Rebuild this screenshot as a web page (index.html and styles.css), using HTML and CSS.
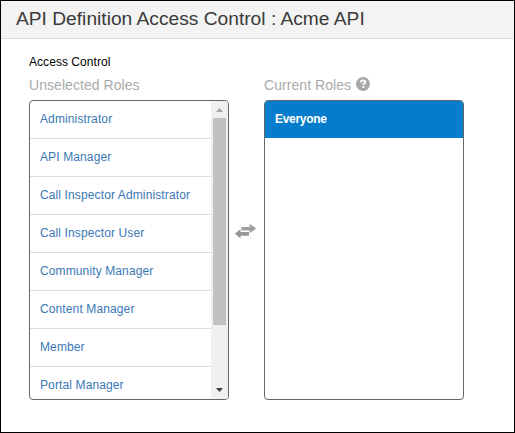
FILE: index.html
```html
<!DOCTYPE html>
<html lang="en">
<head>
<meta charset="utf-8">
<title>API Definition Access Control</title>
<link rel="stylesheet" href="styles.css">
</head>
<body>
<div class="window">
  <header class="header"><h1>API Definition Access Control : Acme API</h1></header>
  <main class="content">
    <div class="section-title">Access Control</div>
    <div class="picker">
      <section class="column">
        <h2>Unselected Roles</h2>
        <div class="box">
          <ul class="roles">
            <li>Administrator</li>
            <li>API Manager</li>
            <li>Call Inspector Administrator</li>
            <li>Call Inspector User</li>
            <li>Community Manager</li>
            <li>Content Manager</li>
            <li>Member</li>
            <li>Portal Manager</li>
          </ul>
          <div class="scrollbar">
            <svg class="arrow" width="17" height="17" viewBox="0 0 17 17"><path d="M5 11h7L8.500 7z" fill="#a3a3a3"/></svg>
            <div class="thumb"></div>
            <svg class="arrow" width="17" height="17" viewBox="0 0 17 17"><path d="M5 6h7L8.500 10z" fill="#404040"/></svg>
          </div>
        </div>
      </section>
      <div class="swap">
        <svg width="23" height="16" viewBox="0 0 23 16"><path d="M7.500 4h8.200V.8L22.200 5.500l-6.500 4.700V7.400H7.500z" fill="#a0a0a0"/><path d="M15 9H6.500V6L.8 10.700l5.700 4.700v-2.600H15z" fill="#989898"/></svg>
      </div>
      <section class="column">
        <h2>Current Roles <svg class="help" width="14" height="14" viewBox="0 0 14 14"><circle cx="7" cy="7" r="7" fill="#a8a8a8"/><path d="M4.700 5.300C4.900 3.900 5.800 3.400 7 3.400c1.300 0 2.200.7 2.200 1.800 0 1.300-1.900 1.400-1.900 2.900" fill="none" stroke="#fff" stroke-width="1.900"/><path d="M6.300 9.200h2V11h-2z" fill="#fff"/></svg></h2>
        <div class="box">
          <ul class="roles">
            <li class="selected">Everyone</li>
          </ul>
        </div>
      </section>
    </div>
  </main>
</div>
</body>
</html>
```
FILE: styles.css
```css
* { box-sizing: border-box; }
body {
  margin: 0;
  font-family: "Liberation Sans", Arial, sans-serif;
  font-size: 12px;
  color: #000;
  background: #fff;
}
.window {
  width: 515px;
  height: 433px;
  border: 1px solid #000;
  overflow: hidden;
}
.header {
  height: 38px;
  padding-left: 15px;
  background: #f3f3f3;
  border-bottom: 1px solid #ddd;
}
h1 {
  margin: 0;
  font-size: 19.2px;
  line-height: 35px;
  font-weight: 400;
  color: #3a3a3a;
  white-space: nowrap;
}
.content { padding: 15px 0 0 28px; }
.section-title { height: 22px; line-height: 16px; letter-spacing: 0.05px; }
.picker { display: flex; }
.column { width: 200px; }
h2 {
  display: flex;
  gap: 5px;
  margin: 0;
  height: 24px;
  font-size: 14px;
  line-height: 18px;
  font-weight: 400;
  letter-spacing: 0.06px;
  color: #aaa;
}
.help { margin-top: 1px; }
.box {
  display: flex;
  height: 300px;
  border: 1px solid #666;
  border-radius: 4px;
  overflow: hidden;
}
.roles {
  flex: 1;
  margin: 0;
  padding: 0;
  list-style: none;
}
.roles li {
  height: 38px;
  padding-left: 10px;
  line-height: 36px;
  letter-spacing: 0.12px;
  color: #3a78b5;
  border-bottom: 1px solid #ddd;
}
.roles .selected {
  height: 37px;
  color: #fff;
  font-weight: 700;
  letter-spacing: -0.3px;
  background: #067dcc;
  border-color: #067dcc;
}
.scrollbar {
  display: flex;
  flex-direction: column;
  justify-content: space-between;
  width: 17px;
  background: #f0f0f0;
}
.thumb {
  height: 207px;
  margin: 0 2px auto;
  background: #c1c1c1;
}
.arrow { display: block; }
.swap {
  width: 35px;
  padding: 147px 0 0 5px;
}
```
